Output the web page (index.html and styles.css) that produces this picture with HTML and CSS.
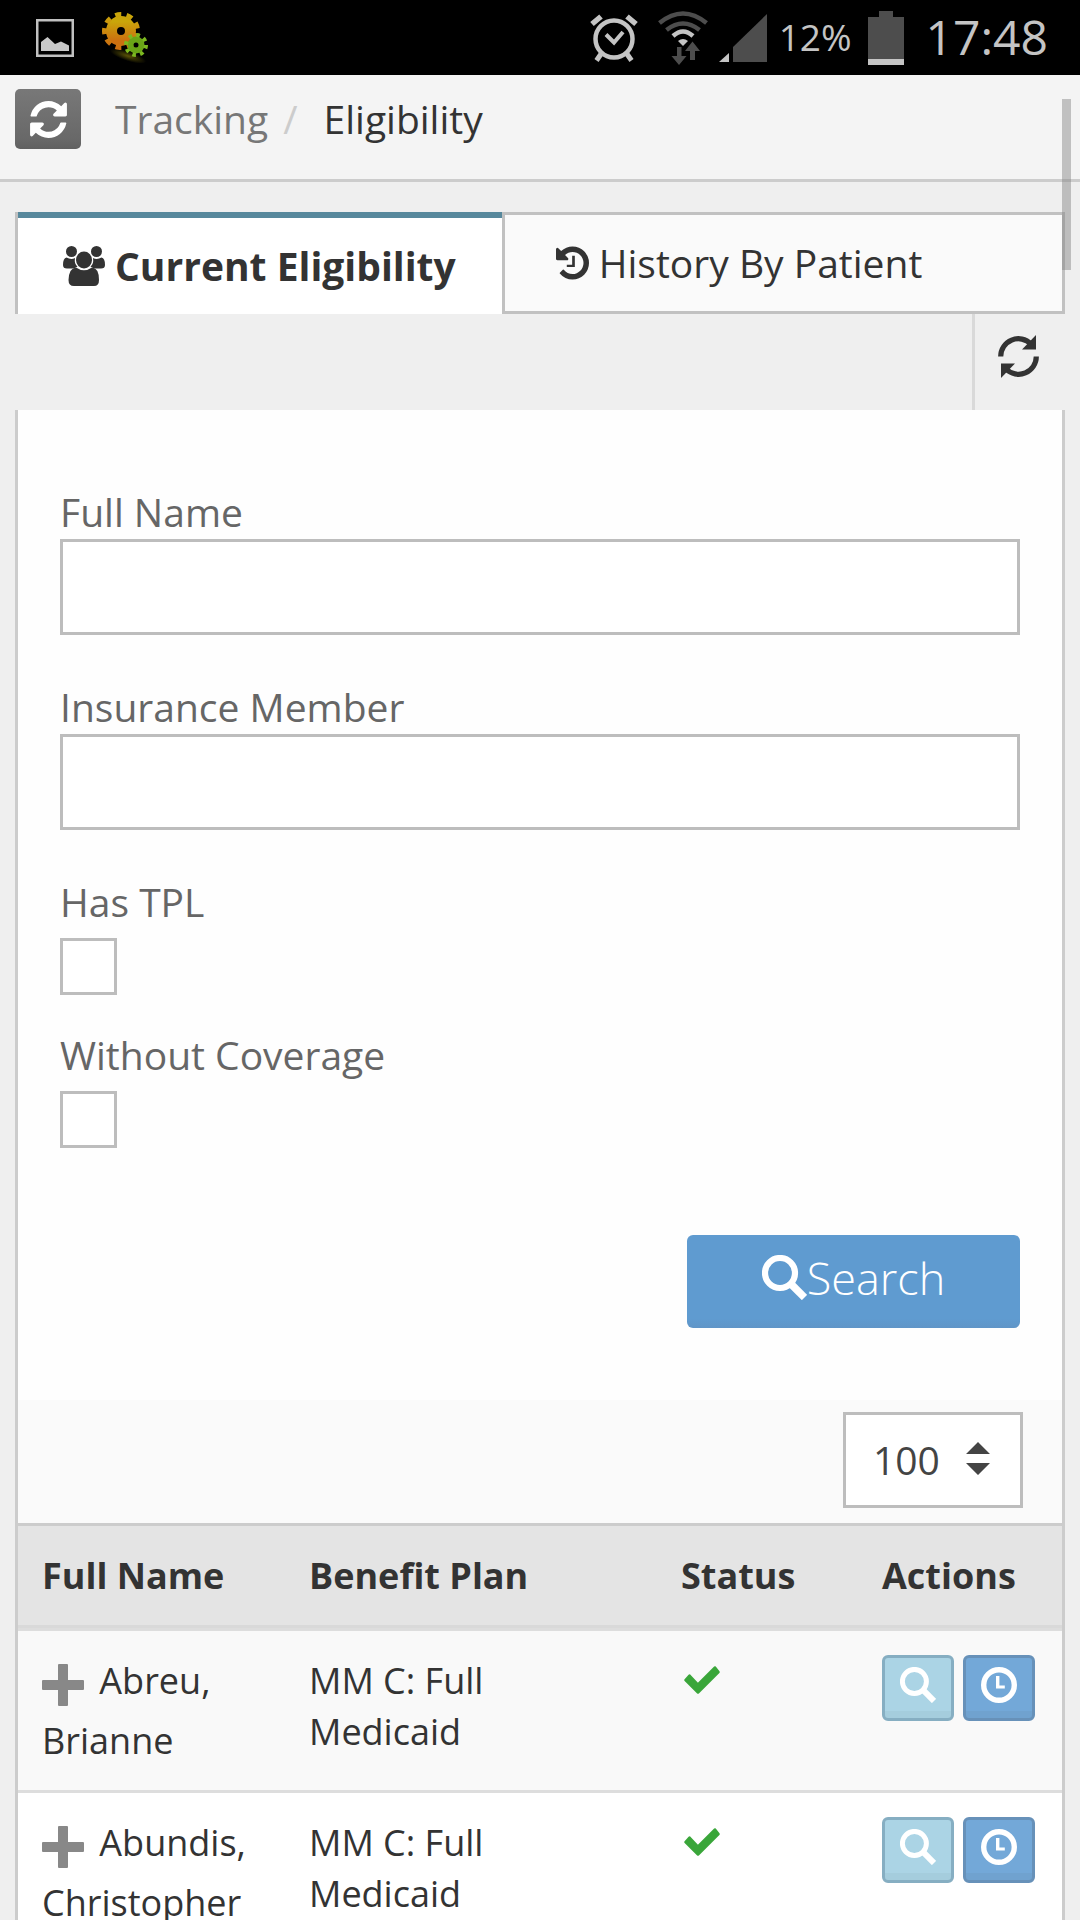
FILE: index.html
```html
<!DOCTYPE html>
<html lang="en">
<head>
	<meta charset="UTF-8">
	<meta name="viewport" content="width=device-width, initial-scale=1.0">
	<title>Eligibility</title>
	<link rel="stylesheet" href="styles.css">
</head>

<body>

	<!-- shared icons -->
	<svg class="sprite" aria-hidden="true">
		<symbol id="icon-search" viewBox="0 0 45 45">
			<circle cx="18" cy="18" r="15" fill="none" stroke="currentColor" stroke-width="6.2"/>
			<path d="M29 29L42.500 42.500" fill="none" stroke="currentColor" stroke-width="7.500"/>
		</symbol>
		<symbol id="icon-clock" viewBox="0 0 36 36">
			<circle cx="18" cy="18" r="15.300" fill="none" stroke="currentColor" stroke-width="5.400"/>
			<path d="M15 9h3.400v9.400h5.400v3H15z" fill="currentColor"/>
		</symbol>
		<symbol id="icon-check" viewBox="0 0 36 28">
			<path d="M1.500 14L5.500 9.500L14 18.500L31 1.500L34.500 6L14 26.500z" fill="currentColor" stroke="currentColor" stroke-width="2.500" stroke-linejoin="round"/>
		</symbol>
		<symbol id="icon-plus" viewBox="0 0 42 42">
			<path d="M17 0h8q1 0 1 1v15h15q1 0 1 1v8q0 1-1 1H26v15q0 1-1 1h-8q-1 0-1-1V26H1q-1 0-1-1v-8q0-1 1-1h15V1q0-1 1-1z" fill="currentColor"/>
		</symbol>
	</svg>

	<div class="status-bar">
		<div class="status-left">
			<svg width="38" height="38" viewBox="0 0 38 38">
				<rect x="1.250" y="1.250" width="35.500" height="35.500" fill="none" stroke="#c0c0c0" stroke-width="2.500"/>
				<path d="M5 32V23L11.500 18L19 25L25 22.500L33 26.500V32z" fill="#c8c8c8"/>
			</svg>
			<svg width="48" height="54" viewBox="0 0 48 54">
				<defs>
					<linearGradient id="gold" x1="0" y1="0" x2="0" y2="1">
						<stop offset="0" stop-color="#c9a60a"/>
						<stop offset="1" stop-color="#cc7010"/>
					</linearGradient>
					<radialGradient id="shadow">
						<stop offset="0" stop-color="#5a5206"/>
						<stop offset="1" stop-color="#000"/>
					</radialGradient>
				</defs>
				<ellipse cx="26" cy="45" rx="19" ry="5" fill="url(#shadow)" transform="rotate(18 26 45)"/>
				<circle cx="19" cy="20" r="9.500" fill="none" stroke="url(#gold)" stroke-width="11"/>
				<circle cx="19" cy="20" r="16.500" fill="none" stroke="url(#gold)" stroke-width="5" stroke-dasharray="6 5.520" transform="rotate(8 19 20)"/>
				<circle cx="34" cy="34" r="5.500" fill="none" stroke="#6aa517" stroke-width="6"/>
				<circle cx="34" cy="34" r="10" fill="none" stroke="#7cb820" stroke-width="4" stroke-dasharray="3.600 4.250"/>
			</svg>
		</div>
		<div class="status-right">
			<svg width="48" height="48" viewBox="0 0 48 48">
				<g fill="none" stroke="#c4c4c4">
					<circle cx="24" cy="25" r="18.500" stroke-width="4.500"/>
					<path d="M2 10L11 2.500M46 10L37 2.500" stroke-width="5.500"/>
					<path d="M11 40L6.500 46.500M37 40L41.500 46.500" stroke-width="5"/>
					<path d="M16 20.500L24 28.500L33 18" stroke-width="4"/>
				</g>
			</svg>
			<svg class="wifi" width="50" height="54" viewBox="0 0 50 54">
				<g fill="none" stroke="#4d4d4d" stroke-width="4.500">
					<path d="M1.500 12Q25-7 48.500 12"/>
					<path d="M8.500 19Q25 6 41.500 19"/>
				</g>
				<path d="M15 25Q25 16 35 25" fill="none" stroke="#c4c4c4" stroke-width="4.500"/>
				<path d="M20 30Q25 26 30 30L25 35z" fill="#c4c4c4"/>
				<path d="M19 36h4.500v9h5L21 54L13.500 45H19zM32 49V40h-5l7.500-9.500L42 40h-5v9z" fill="#4d4d4d"/>
			</svg>
			<svg width="48" height="48" viewBox="0 0 48 48">
				<path d="M14 48V33L48 0V48z" fill="#4d4d4d"/>
				<path d="M0 48L10 39V48z" fill="#c4c4c4"/>
			</svg>
			<span class="percent">12%</span>
			<svg width="36" height="54" viewBox="0 0 36 54">
				<path d="M0 6h11V0h14v6h11v42H0z" fill="#4d4d4d"/>
				<path d="M0 48h36v6H0z" fill="#c4c4c4"/>
			</svg>
			<span class="time">17:48</span>
		</div>
	</div>

	<header class="page-header">
		<button class="btn-refresh" type="button" aria-label="Refresh page">
			<svg width="43" height="43" viewBox="0 0 1792 1792" fill="currentColor"><path d="M1639 1056q0 5-1 7-64 268-268 434.500t-478 166.500q-146 0-282.500-55t-243.500-157l-129 129q-19 19-45 19t-45-19-19-45v-448q0-26 19-45t45-19h448q26 0 45 19t19 45-19 45l-137 137q71 66 161 102t187 36q134 0 250-65t186-179q11-17 53-117 8-23 30-23h192q13 0 22.500 9.500t9.500 22.500zm25-800v448q0 26-19 45t-45 19h-448q-26 0-45-19t-19-45 19-45l138-138q-148-137-349-137-134 0-250 65t-186 179q-11 17-53 117-8 23-30 23h-199q-13 0-22.500-9.500t-9.500-22.500v-7q65-268 270-434.500t480-166.500q146 0 284 55.500t245 156.500l130-129q19-19 45-19t45 19 19 45z"/></svg>
		</button>
		<nav aria-label="Breadcrumb">
			<ol class="breadcrumb">
				<li><a href="#">Tracking</a></li>
				<li class="active">Eligibility</li>
			</ol>
		</nav>
	</header>

	<main class="content">
		<ul class="tabs">
			<li class="tab active">
				<a href="#current">
					<svg width="42" height="40" viewBox="0 0 42 40" fill="currentColor">
						<circle cx="8.500" cy="5.500" r="5.500"/>
						<circle cx="33.500" cy="5.500" r="5.500"/>
						<path d="M3.500 11.500Q8 14 12 12Q11 18 14.500 20.500Q12 22.500 9 22.500H4Q0 22.500 0 19Q0 12 3.500 11.500z"/>
						<path d="M38.500 11.500Q34 14 30 12Q31 18 27.500 20.500Q30 22.500 33 22.500H38Q42 22.500 42 19Q42 12 38.500 11.500z"/>
						<ellipse cx="21" cy="14" rx="8" ry="8.500"/>
						<path d="M13 21.500Q21 27 29 21.500Q36 22 36 34Q36 40 31 40H11Q5.500 40 5.500 34Q6 22 13 21.500z"/>
					</svg>
					Current Eligibility
				</a>
			</li>
			<li class="tab">
				<a href="#history">
					<svg width="33" height="34" viewBox="128 128 1536 1536" fill="currentColor"><path d="M1664 896q0 156-61 298t-164 245-245 164-298 61q-172 0-327-72.500t-264-204.500q-7-10-6.500-22.500t8.500-20.500l137-138q10-9 25-9 16 2 23 12 73 95 179 147t225 52q104 0 198.500-40.500t163.500-109.500 109.500-163.500 40.500-198.500-40.500-198.500-109.500-163.500-163.500-109.500-198.500-40.500q-98 0-188 35.500t-160 101.500l137 138q31 30 14 69-17 40-59 40h-448q-26 0-45-19t-19-45v-448q0-42 40-59 39-17 69 14l130 129q107-101 244.500-156.500t284.500-55.500q156 0 298 61t245 164 164 245 61 298z"/><path d="M880 560h125v520H630V975h250z"/></svg>
					History By Patient
				</a>
			</li>
		</ul>

		<div class="toolbar">
			<button class="btn-reload" type="button" aria-label="Reload list">
				<svg width="41" height="43" viewBox="0 0 41 43">
					<g id="half">
						<path d="M2.700 21.500A17.700 17.700 0 0 1 33 9" fill="none" stroke="currentColor" stroke-width="5.200"/>
						<path d="M38 0V14.500H24z" fill="currentColor"/>
					</g>
					<use href="#half" transform="rotate(180 20.500 21.500)"/>
				</svg>
			</button>
		</div>

		<div class="panel">
			<form class="filters">
				<div class="field">
					<label for="fullName">Full Name</label>
					<input class="text-input" type="text" id="fullName">
				</div>
				<div class="field">
					<label for="member">Insurance Member</label>
					<input class="text-input" type="text" id="member">
				</div>
				<div class="field check-field">
					<label for="tpl">Has TPL</label>
					<input class="check-input" type="checkbox" id="tpl">
				</div>
				<div class="field check-field">
					<label for="noCoverage">Without Coverage</label>
					<input class="check-input" type="checkbox" id="noCoverage">
				</div>
				<button class="btn-search" type="submit">
					<svg width="45" height="45"><use href="#icon-search"/></svg>
					<span>Search</span>
				</button>
			</form>

			<div class="page-size">
				<div class="select-box">
					<select aria-label="Rows per page">
						<option>100</option>
					</select>
					<svg class="arrows" width="24" height="33" viewBox="0 0 24 33"><path d="M0 12L12 0L24 12zM0 21h24L12 33z" fill="#444"/></svg>
				</div>
			</div>

			<table class="patients">
				<colgroup>
					<col class="col-name">
					<col>
					<col class="col-status">
					<col class="col-actions">
				</colgroup>
				<thead>
					<tr>
						<th>Full Name</th>
						<th>Benefit Plan</th>
						<th>Status</th>
						<th>Actions</th>
					</tr>
				</thead>
				<tbody>
					<tr>
						<td>
							<button class="btn-expand" type="button" aria-label="Expand"><svg width="42" height="42"><use href="#icon-plus"/></svg></button>
							Abreu, Brianne
						</td>
						<td><div class="plan">MM C: Full Medicaid</div></td>
						<td><svg class="check" width="36" height="28"><use href="#icon-check"/></svg></td>
						<td>
							<div class="actions">
								<button class="btn-view" type="button" aria-label="View"><svg width="36" height="36"><use href="#icon-search"/></svg></button>
								<button class="btn-history" type="button" aria-label="History"><svg width="36" height="36"><use href="#icon-clock"/></svg></button>
							</div>
						</td>
					</tr>
					<tr>
						<td>
							<button class="btn-expand" type="button" aria-label="Expand"><svg width="42" height="42"><use href="#icon-plus"/></svg></button>
							Abundis, Christopher
						</td>
						<td><div class="plan">MM C: Full Medicaid</div></td>
						<td><svg class="check" width="36" height="28"><use href="#icon-check"/></svg></td>
						<td>
							<div class="actions">
								<button class="btn-view" type="button" aria-label="View"><svg width="36" height="36"><use href="#icon-search"/></svg></button>
								<button class="btn-history" type="button" aria-label="History"><svg width="36" height="36"><use href="#icon-clock"/></svg></button>
							</div>
						</td>
					</tr>
				</tbody>
			</table>
		</div>
	</main>

	<div class="scroll-thumb"></div>

</body>

</html>
```

FILE: styles.css
```css
*{
	margin: 0;
	padding: 0;
	box-sizing: border-box;
}

html{
	scrollbar-width: none;
}

body{
	position: relative;
	font-family: "Open Sans", "Noto Sans", sans-serif;
	font-size: 39px;
	line-height: 54px;
	color: #333;
	background-color: #efefef;
}

a{
	color: inherit;
	text-decoration: none;
}
ul, ol{
	list-style: none;
}
button, input, select{
	font: inherit;
	color: inherit;
	border-radius: 0;
}
svg{
	flex: none;
}
.sprite{
	position: absolute;
	width: 0;
	height: 0;
}

/* Phone status bar */
.status-bar{
	display: flex;
	justify-content: space-between;
	height: 75px;
	padding: 0 32px 0 36px;
	background-color: #000;
	color: #c4c4c4;
}
.status-left{
	display: flex;
	align-items: center;
	gap: 28px;
}
.status-right{
	display: flex;
	align-items: center;
}
.status-right span{
	padding-bottom: 2px;
	font-weight: 500;
}
.wifi{
	margin: 0 11px 0 20px;
}
.percent{
	margin: 0 16px 0 12px;
	font-size: 37px;
}
.time{
	margin-left: 22px;
	font-size: 48px;
}

/* Header */
.page-header{
	display: flex;
	gap: 34px;
	height: 107px;
	padding: 14px 15px 0;
	background-color: #f4f4f4;
	border-bottom: 3px solid #ccc;
}
.btn-refresh{
	display: flex;
	justify-content: center;
	align-items: center;
	width: 66px;
	height: 60px;
	border: none;
	border-radius: 5px;
	background: linear-gradient(#787878, #686868 85%, #606060);
	color: #fff;
}
.breadcrumb{
	display: flex;
	padding-top: 3px;
	color: #333;
}
.breadcrumb a{
	color: #777;
}
.breadcrumb .active::before{
	content: "/";
	padding: 0 26px 0 15px;
	color: #ccc;
}

/* Tabs */
.content{
	padding: 30px 15px 0;
}
.tabs{
	display: flex;
	height: 102px;
}
.tab{
	flex: 1;
	border: 3px solid #c1c1c1;
	border-left: none;
	background-color: #fafafa;
}
.tab a{
	display: flex;
	align-items: center;
	gap: 10px;
	height: 96px;
	padding-left: 51px;
}
.tab.active{
	flex: none;
	border-top: none;
	border-bottom: none;
	border-left: 3px solid #c1c1c1;
	background-color: #fff;
	box-shadow: inset 0 6px #57889c;
	font-weight: bold;
}
.tab.active a{
	height: 102px;
	padding: 6px 46px 0 45px;
}

.toolbar{
	display: flex;
	justify-content: flex-end;
	height: 96px;
}
.btn-reload{
	width: 93px;
	padding-right: 4px;
	border: none;
	border-left: 3px solid #d9d9d9;
	background: none;
}

/* Filter form */
.panel{
	border: 3px solid #ccc;
	border-width: 0 3px;
	background-color: #fefefe;
}
.filters{
	display: flex;
	flex-direction: column;
	padding: 75px 42px 72px;
}
.field{
	display: flex;
	flex-direction: column;
	margin-bottom: 45px;
	color: #666;
}
.text-input{
	width: 100%;
	height: 96px;
	padding: 0 24px;
	border: 3px solid #bdbdbd;
	background-color: #fff;
}
.check-field{
	align-items: flex-start;
	gap: 9px;
	margin-bottom: 33px;
}
.check-input{
	appearance: none;
	width: 57px;
	height: 57px;
	border: 3px solid #bdbdbd;
	background-color: #fff;
}
.btn-search{
	display: flex;
	justify-content: center;
	align-items: center;
	align-self: flex-end;
	width: 333px;
	height: 93px;
	margin-top: 54px;
	padding-bottom: 8px;
	border: none;
	border-radius: 6px;
	background: linear-gradient(#5f9bd0 90%, #6095c7);
	color: #fff;
	font-size: 45px;
	font-weight: 300;
}

/* Page size */
.page-size{
	display: flex;
	justify-content: flex-end;
	padding: 12px 39px 15px;
	background-color: #fafafa;
	border-bottom: 3px solid #ccc;
}
.select-box{
	position: relative;
}
.page-size select{
	appearance: none;
	display: block;
	width: 180px;
	height: 96px;
	padding-left: 27px;
	border: 3px solid #bdbdbd;
	background-color: #fff;
	color: #444;
}
.arrows{
	position: absolute;
	right: 33px;
	top: 30px;
	pointer-events: none;
}

/* Table */
.patients{
	width: 100%;
	table-layout: fixed;
	border-collapse: separate;
	border-spacing: 0;
	font-size: 36px;
	line-height: 51px;
}
.col-name{
	width: 267px;
}
.col-status{
	width: 201px;
}
.col-actions{
	width: 204px;
}
.patients th{
	padding: 24px 0 24px 24px;
	background-color: #e4e4e4;
	border-bottom: 3px solid #d9d9d9;
	text-align: left;
}
.patients td{
	padding: 24px 0 24px 24px;
	border-top: 3px solid #ddd;
	vertical-align: top;
}
.patients tbody tr{
	background-color: #fff;
}
.patients tbody tr:nth-child(odd){
	background-color: #f9f9f9;
}
.btn-expand{
	width: 42px;
	height: 42px;
	margin: 9px 6px 9px 0;
	border: none;
	background: none;
	color: #888;
	vertical-align: top;
}
.btn-expand svg{
	display: block;
}
.plan{
	max-width: 240px;
}
.check{
	display: block;
	margin: 11px 3px;
	color: #3aa63a;
}
.actions{
	display: flex;
	gap: 9px;
}
.actions button{
	display: flex;
	justify-content: center;
	width: 72px;
	height: 66px;
	padding-top: 9px;
	border: 3px solid #86aec2;
	border-radius: 6px;
	background: linear-gradient(#abd4e5 88%, #a5cddd 88%);
	color: #fff;
}
.actions .btn-history{
	border-color: #6791b9;
	background: linear-gradient(#73a8d8 88%, #70a2cf 88%);
}

/* Scroll indicator over the page */
.scroll-thumb{
	position: absolute;
	top: 99px;
	right: 9px;
	width: 9px;
	height: 171px;
	background-color: rgba(128, 128, 128, 0.45);
}
```
